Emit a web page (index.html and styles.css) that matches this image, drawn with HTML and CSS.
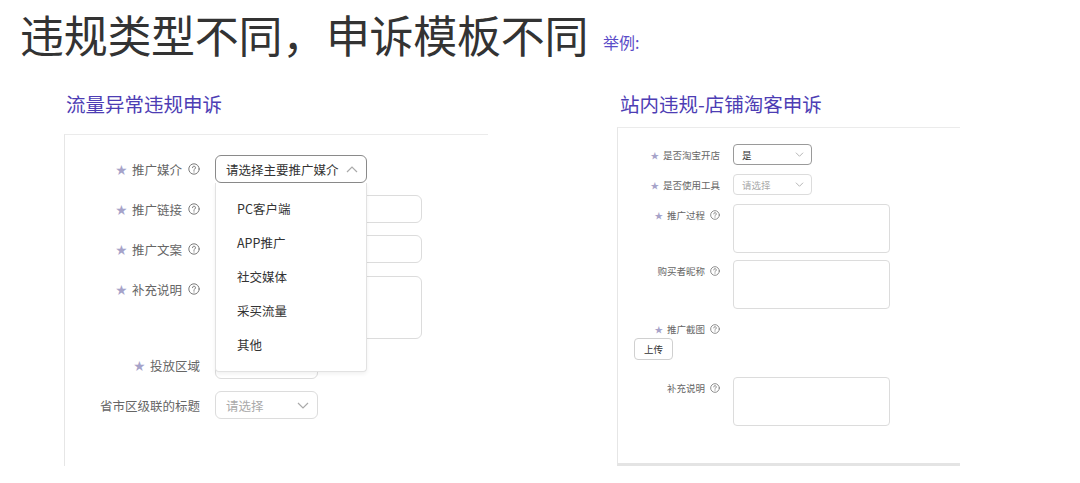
FILE: index.html
```html
<!DOCTYPE html>
<html lang="zh-CN">
<head>
<meta charset="utf-8">
<title>申诉模板</title>
<link rel="stylesheet" href="styles.css">
</head>
<body>
<div class="page">
  <header class="header">
    <h1 class="title">违规类型不同，申诉模板不同</h1><span class="example">举例:</span>
  </header>
  <div class="columns">
    <section class="col col-left">
      <h2 class="heading">流量异常违规申诉</h2>
      <div class="panel panel-left">
        <div class="form form-left">
          <div class="label"><span class="star">★</span><span>推广媒介</span><svg class="help" viewBox="0 0 12 12"><circle cx="6" cy="6" r="5.2"/><path d="M4.5 4.7a1.5 1.5 0 1 1 2.2 1.3c-.5.3-.7.6-.7 1.2v.3"/><circle class="dot" cx="6" cy="8.9" r=".55"/></svg></div>
          <div class="ctl-wrap">
            <div class="select select-open w152"><span>请选择主要推广媒介</span><svg class="chev" viewBox="0 0 12 7"><path d="M1 6l5-5 5 5"/></svg></div>
            <ul class="dropdown">
              <li>PC客户端</li>
              <li>APP推广</li>
              <li>社交媒体</li>
              <li>采买流量</li>
              <li>其他</li>
            </ul>
          </div>
          <div class="label"><span class="star">★</span><span>推广链接</span><svg class="help" viewBox="0 0 12 12"><circle cx="6" cy="6" r="5.2"/><path d="M4.5 4.7a1.5 1.5 0 1 1 2.2 1.3c-.5.3-.7.6-.7 1.2v.3"/><circle class="dot" cx="6" cy="8.9" r=".55"/></svg></div>
          <div class="input w207"></div>
          <div class="label"><span class="star">★</span><span>推广文案</span><svg class="help" viewBox="0 0 12 12"><circle cx="6" cy="6" r="5.2"/><path d="M4.5 4.7a1.5 1.5 0 1 1 2.2 1.3c-.5.3-.7.6-.7 1.2v.3"/><circle class="dot" cx="6" cy="8.9" r=".55"/></svg></div>
          <div class="input w207"></div>
          <div class="label"><span class="star">★</span><span>补充说明</span><svg class="help" viewBox="0 0 12 12"><circle cx="6" cy="6" r="5.2"/><path d="M4.5 4.7a1.5 1.5 0 1 1 2.2 1.3c-.5.3-.7.6-.7 1.2v.3"/><circle class="dot" cx="6" cy="8.9" r=".55"/></svg></div>
          <div class="input textarea-left w207"></div>
          <div class="label"><span class="star">★</span><span>投放区域</span></div>
          <div class="select w103"><span class="ph">请选择</span><svg class="chev" viewBox="0 0 12 7"><path d="M1 1l5 5 5-5"/></svg></div>
          <div class="label"><span>省市区级联的标题</span></div>
          <div class="select w103"><span class="ph">请选择</span><svg class="chev" viewBox="0 0 12 7"><path d="M1 1l5 5 5-5"/></svg></div>
        </div>
      </div>
    </section>
    <section class="col col-right">
      <h2 class="heading">站内违规-店铺淘客申诉</h2>
      <div class="panel panel-right">
        <div class="form form-right">
          <div class="label"><span class="star">★</span><span>是否淘宝开店</span></div>
          <div class="select select-sm active"><span>是</span><svg class="chev" viewBox="0 0 12 7"><path d="M1 1l5 5 5-5"/></svg></div>
          <div class="label"><span class="star">★</span><span>是否使用工具</span></div>
          <div class="select select-sm"><span class="ph">请选择</span><svg class="chev" viewBox="0 0 12 7"><path d="M1 1l5 5 5-5"/></svg></div>
          <div class="label"><span class="star">★</span><span>推广过程</span><svg class="help" viewBox="0 0 12 12"><circle cx="6" cy="6" r="5.2"/><path d="M4.5 4.7a1.5 1.5 0 1 1 2.2 1.3c-.5.3-.7.6-.7 1.2v.3"/><circle class="dot" cx="6" cy="8.9" r=".55"/></svg></div>
          <div class="input textarea-right"></div>
          <div class="label up"><span>购买者昵称</span><svg class="help" viewBox="0 0 12 12"><circle cx="6" cy="6" r="5.2"/><path d="M4.5 4.7a1.5 1.5 0 1 1 2.2 1.3c-.5.3-.7.6-.7 1.2v.3"/><circle class="dot" cx="6" cy="8.9" r=".55"/></svg></div>
          <div class="input textarea-right up"></div>
          <div class="label"><span class="star">★</span><span>推广截图</span><svg class="help" viewBox="0 0 12 12"><circle cx="6" cy="6" r="5.2"/><path d="M4.5 4.7a1.5 1.5 0 1 1 2.2 1.3c-.5.3-.7.6-.7 1.2v.3"/><circle class="dot" cx="6" cy="8.9" r=".55"/></svg></div>
          <div class="empty"></div>
          <div class="upload-row"><button class="upload" type="button">上传</button></div>
          <div class="label last"><span>补充说明</span><svg class="help" viewBox="0 0 12 12"><circle cx="6" cy="6" r="5.2"/><path d="M4.5 4.7a1.5 1.5 0 1 1 2.2 1.3c-.5.3-.7.6-.7 1.2v.3"/><circle class="dot" cx="6" cy="8.9" r=".55"/></svg></div>
          <div class="input textarea-right last"></div>
        </div>
      </div>
    </section>
  </div>
</div>
</body>
</html>
```
FILE: styles.css
```css
* { box-sizing: border-box; }
html, body { margin: 0; padding: 0; background: #fff; }
body {
  width: 1080px;
  height: 483px;
  overflow: hidden;
  font-family: "Noto Sans CJK SC", "Noto Sans", sans-serif;
  color: #333;
}
.page { display: flex; flex-direction: column; }

.header {
  display: flex;
  align-items: baseline;
  padding: 8px 0 0 20px;
  height: 92px;
}
.title {
  margin: 0;
  font-size: 44px;
  font-weight: 400;
  line-height: 52px;
  color: #333;
  letter-spacing: -0.3px;
}
.example {
  margin-left: 15px;
  font-size: 16px;
  color: #5a4cc8;
  position: relative;
  top: -4px;
}

.columns { display: flex; align-items: flex-start; }
.col { display: flex; flex-direction: column; }
.col-left { margin-left: 64px; width: 424px; }
.col-right { margin-left: 129px; width: 343px; }

.heading {
  margin: 0;
  font-size: 19.5px;
  line-height: 24px;
  font-weight: 400;
  color: #4d3db4;
  padding-left: 2px;
}
.col-left .heading { margin-bottom: 18px; }
.col-right .heading { padding-left: 3px; margin-bottom: 11px; }

.panel {
  border-top: 1px solid #ebebeb;
  border-left: 1px solid #e6e6e6;
}
.panel-left { height: 332px; padding-top: 20px; }
.panel-right {
  height: 339px;
  padding-top: 16px;
  border-bottom: 3px solid #e4e4e4;
}

.form { display: grid; align-items: start; }
.form-left {
  grid-template-columns: 135px auto;
  column-gap: 15px;
  row-gap: 12px;
  font-size: 12.5px;
}
.form-right {
  grid-template-columns: 102px auto;
  column-gap: 13px;
  row-gap: 9px;
  font-size: 9.5px;
}

.label {
  display: flex;
  align-items: center;
  justify-content: flex-end;
  color: #666;
  white-space: nowrap;
}
.form-left .label { height: 28px; }
.form-right .label { height: 21px; }
.star { color: #a6a3c9; margin-right: 5px; font-size: 0.9em; }
.form-right .star { margin-right: 4px; }
.help {
  width: 12px; height: 12px;
  margin-left: 6px;
  fill: none;
  stroke: #7a7a7a;
  stroke-width: 1;
  stroke-linecap: round;
}
.help .dot { fill: #7a7a7a; stroke: none; }
.form-right .help { width: 10px; height: 10px; margin-left: 5px; }

.ctl-wrap { position: relative; justify-self: start; }

.select, .input {
  border: 1px solid #dcdcdc;
  border-radius: 6px;
  background: #fff;
  justify-self: start;
}
.select {
  display: flex;
  align-items: center;
  justify-content: space-between;
  height: 28px;
  padding: 0 8px 0 10px;
  color: #333;
}
.select-open { border-color: #8a8a8a; }
.w152 { width: 152px; }
.w103 { width: 103px; }
.w207 { width: 207px; height: 28px; }
.textarea-left { height: 63px; margin-top: 1px; }
.ph { color: #aaa; }
.chev {
  width: 12px; height: 7px;
  fill: none;
  stroke: #aaa;
  stroke-width: 1.2;
}

.dropdown {
  position: absolute;
  left: 0;
  top: 28px;
  width: 152px;
  margin: 0;
  padding: 9px 0;
  list-style: none;
  background: #fff;
  border: 1px solid #e2e2e2;
  border-top: none;
  border-radius: 0 0 4px 4px;
  box-shadow: 0 2px 4px rgba(0,0,0,0.06);
  z-index: 2;
}
.dropdown li {
  height: 34px;
  line-height: 34px;
  padding-left: 21px;
  font-size: 12.5px;
  color: #333;
}

.select-sm {
  width: 79px;
  height: 21px;
  border-radius: 4px;
  padding: 0 7px 0 8px;
  font-size: 9.5px;
}
.select-sm.active { border-color: #9a9a9a; }
.select-sm .chev { width: 9px; height: 5px; }
.textarea-right {
  width: 157px;
  height: 49px;
  border-radius: 4px;
}
.up { margin-top: -2px; }
.empty { height: 21px; }
.upload-row { grid-column: 1 / 3; margin-top: -10px; padding-left: 16px; }
.upload {
  width: 39px;
  height: 22px;
  padding: 0;
  border: 1px solid #d0d0d0;
  border-radius: 4px;
  background: #fff;
  font-family: inherit;
  font-size: 9.5px;
  color: #333;
}
.last { margin-top: 8px; }
```
